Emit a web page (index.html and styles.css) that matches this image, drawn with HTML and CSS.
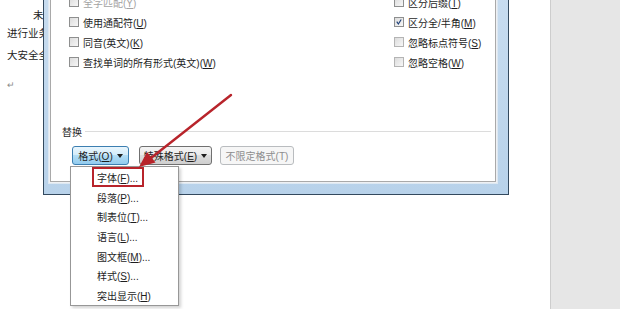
FILE: index.html
```html
<!DOCTYPE html>
<html lang="zh-CN">
<head>
    <meta charset="UTF-8">
    <meta name="viewport" content="width=device-width, initial-scale=1.0">
    <title>查找和替换 - 格式</title>
    <link rel="stylesheet" href="styles.css">
</head>
<body>
    <div class="screen">
        <div class="doc">
            <p class="line line-1">未来安全保障体系</p>
            <p class="line line-2">进行业务安全运营</p>
            <p class="line line-3">大安全全面覆盖</p>
            <p class="line para-mark">↵</p>
        </div>
        <div class="side"></div>

        <div class="dialog">
            <div class="dialog-body">
                <div class="options">
                    <label class="opt disabled"><span class="box"></span><span>全字匹配(<u>Y</u>)</span></label>
                    <label class="opt"><span class="box"></span><span>区分后缀(<u>T</u>)</span></label>
                    <label class="opt"><span class="box"></span><span>使用通配符(<u>U</u>)</span></label>
                    <label class="opt"><span class="box checked">
                        <svg viewBox="0 0 10 10"><path d="M2.2 4.6 L4.2 7.6 L7.8 1.8" fill="none" stroke="#1d3f78" stroke-width="1.4"/></svg>
                    </span><span>区分全/半角(<u>M</u>)</span></label>
                    <label class="opt"><span class="box"></span><span>同音(英文)(<u>K</u>)</span></label>
                    <label class="opt"><span class="box faint"></span><span>忽略标点符号(<u>S</u>)</span></label>
                    <label class="opt"><span class="box"></span><span>查找单词的所有形式(英文)(<u>W</u>)</span></label>
                    <label class="opt"><span class="box faint"></span><span>忽略空格(<u>W</u>)</span></label>
                </div>

                <div class="group-title"><span>替换</span></div>

                <div class="buttons">
                    <button class="btn btn-format pressed"><span>格式(<u>O</u>)</span><i class="caret"></i></button>
                    <button class="btn btn-special"><span>特殊格式(<u>E</u>)</span><i class="caret"></i></button>
                    <button class="btn btn-clear" disabled><span>不限定格式(T)</span></button>
                </div>
            </div>
        </div>

        <ul class="menu">
            <li>字体(<u>F</u>)...</li>
            <li>段落(<u>P</u>)...</li>
            <li>制表位(<u>T</u>)...</li>
            <li>语言(<u>L</u>)...</li>
            <li>图文框(<u>M</u>)...</li>
            <li>样式(<u>S</u>)...</li>
            <li>突出显示(<u>H</u>)</li>
        </ul>
        <div class="highlight"></div>

        <svg class="arrow" viewBox="0 0 620 309" width="620" height="309">
            <line x1="231" y1="95" x2="151" y2="158" stroke="#b8242b" stroke-width="2.4" stroke-linecap="round"/>
            <polygon points="139,167 155.5,162.5 147,152" fill="#b8242b"/>
        </svg>
    </div>
</body>
</html>
```

FILE: styles.css
```css
* {
    margin: 0;
    padding: 0;
    box-sizing: border-box;
}

body {
    font-family: "Liberation Sans", "Noto Sans CJK SC", sans-serif;
    font-size: 10px;
    color: #1e1e1e;
    background: #ffffff;
    overflow: hidden;
}

.screen {
    position: relative;
    width: 620px;
    height: 309px;
    display: flex;
    overflow: hidden;
}

/* document behind the dialog */
.doc {
    width: 550px;
    background: #ffffff;
    padding-left: 7px;
    font-size: 10.5px;
    color: #222;
}

.line {
    line-height: 14px;
    white-space: nowrap;
}

.line-1 {
    margin-top: 8px;
    padding-left: 26px;
}

.line-2 {
    margin-top: 4px;
}

.line-3 {
    margin-top: 8px;
}

.para-mark {
    margin-top: 16px;
    font-size: 9px;
    color: #8a8a8a;
}

.side {
    flex: 1;
    background: #e6e6e6;
    border-left: 1px solid #cdcdcd;
}

/* find & replace dialog window */
.dialog {
    position: absolute;
    left: 43px;
    top: -22px;
    width: 466px;
    height: 217px;
    border: 1px solid #33495e;
    background: linear-gradient(to bottom, #c9ddf0, #b8d2ea);
    padding: 0 12px 12px 6px;
}

.dialog-body {
    height: 100%;
    background: #ffffff;
    border: 1px solid #a9a9a9;
    box-shadow: 0 0 0 1px #eef0f3, 0 0 0 2px #dde8f2;
    padding: 12px 0 0 0;
    display: flex;
    flex-direction: column;
}

.options {
    display: grid;
    grid-template-columns: 325px 1fr;
    grid-auto-rows: 20px;
    padding-left: 18px;
}

.opt {
    display: flex;
    align-items: center;
    white-space: nowrap;
}

.opt.disabled {
    color: #a3a3a3;
}

.box {
    width: 10px;
    height: 10px;
    margin-right: 4px;
    border: 1px solid #8e8f8f;
    background: linear-gradient(135deg, #dcdcdc, #f7f7f7);
    display: flex;
}

.box.faint {
    border-color: #b4b4b4;
}

.box svg {
    width: 8px;
    height: 8px;
}

.group-title {
    margin-top: 52px;
    height: 14px;
    display: flex;
    align-items: center;
    padding-left: 11px;
    padding-right: 4px;
}

.group-title span {
    margin-right: 3px;
}

.group-title::after {
    content: "";
    flex: 1;
    height: 1px;
    background: #dcdcdc;
}

.buttons {
    margin-top: 8px;
    padding-left: 21px;
    display: flex;
    gap: 10px;
}

.btn {
    height: 19px;
    font-family: inherit;
    font-size: 10px;
    color: #1e1e1e;
    border: 1px solid #707070;
    border-radius: 3px;
    background: linear-gradient(to bottom, #f4f4f4 0%, #ebebeb 45%, #dddddd 50%, #cfcfcf 100%);
    display: flex;
    align-items: center;
    justify-content: center;
    gap: 4px;
    white-space: nowrap;
}

.btn-format {
    width: 57px;
}

.btn-special {
    width: 73px;
}

.btn-clear {
    width: 74px;
    margin-left: -2px;
    color: #8d8d8d;
    border-color: #b9bcbf;
    background: #f6f6f6;
}

.btn.pressed {
    border-color: #3c7fb1;
    background: linear-gradient(to bottom, #eaf6fd 0%, #d3ecfa 45%, #b2ddf5 50%, #92cbee 100%);
}

.caret {
    width: 0;
    height: 0;
    border-left: 3px solid transparent;
    border-right: 3px solid transparent;
    border-top: 4px solid #1e1e1e;
}

/* dropdown menu of the 格式 button */
.menu {
    position: absolute;
    left: 70px;
    top: 166px;
    width: 109px;
    height: 140px;
    list-style: none;
    background: #ffffff;
    border: 1px solid #979797;
    box-shadow: 2px 2px 3px rgba(0, 0, 0, 0.18);
    padding-top: 2px;
    z-index: 2;
}

.menu li {
    height: 19.7px;
    line-height: 19.7px;
    padding-left: 26px;
    white-space: nowrap;
}

.highlight {
    position: absolute;
    left: 92px;
    top: 167px;
    width: 52px;
    height: 20px;
    border: 2px solid #b8242b;
    z-index: 3;
}

.arrow {
    position: absolute;
    left: 0;
    top: 0;
    z-index: 4;
    pointer-events: none;
}
```
